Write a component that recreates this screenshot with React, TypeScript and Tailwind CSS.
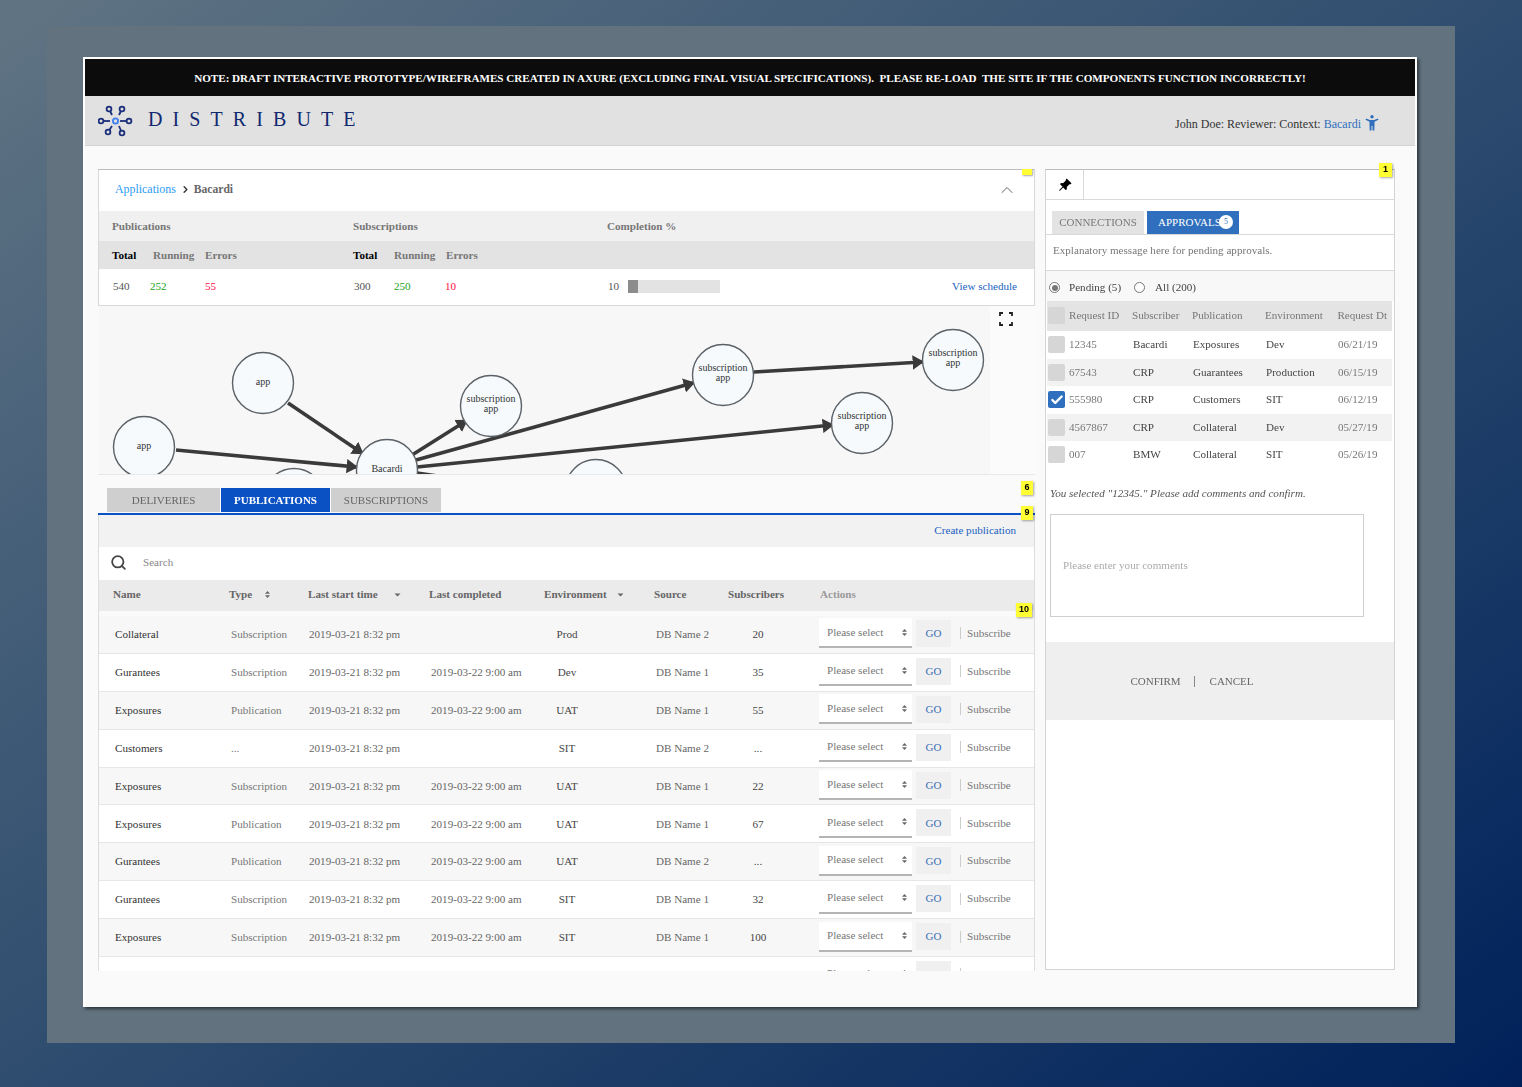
import { ChevronRight, ChevronUp, Check, Search } from "lucide-react";
import { BsPinAngleFill } from "react-icons/bs";

const ROWS = [
  ["Collateral", "Subscription", "2019-03-21 8:32 pm", "", "Prod", "DB Name 2", "20"],
  ["Gurantees", "Subscription", "2019-03-21 8:32 pm", "2019-03-22 9:00 am", "Dev", "DB Name 1", "35"],
  ["Exposures", "Publication", "2019-03-21 8:32 pm", "2019-03-22 9:00 am", "UAT", "DB Name 1", "55"],
  ["Customers", "...", "2019-03-21 8:32 pm", "", "SIT", "DB Name 2", "..."],
  ["Exposures", "Subscription", "2019-03-21 8:32 pm", "2019-03-22 9:00 am", "UAT", "DB Name 1", "22"],
  ["Exposures", "Publication", "2019-03-21 8:32 pm", "2019-03-22 9:00 am", "UAT", "DB Name 1", "67"],
  ["Gurantees", "Publication", "2019-03-21 8:32 pm", "2019-03-22 9:00 am", "UAT", "DB Name 2", "..."],
  ["Gurantees", "Subscription", "2019-03-21 8:32 pm", "2019-03-22 9:00 am", "SIT", "DB Name 1", "32"],
  ["Exposures", "Subscription", "2019-03-21 8:32 pm", "2019-03-22 9:00 am", "SIT", "DB Name 1", "100"],
  ["", "", "", "", "", "", ""],
];

const APPROVALS = [
  ["12345", "Bacardi", "Exposures", "Dev", "06/21/19"],
  ["67543", "CRP", "Guarantees", "Production", "06/15/19"],
  ["555980", "CRP", "Customers", "SIT", "06/12/19"],
  ["4567867", "CRP", "Collateral", "Dev", "05/27/19"],
  ["007", "BMW", "Collateral", "SIT", "05/26/19"],
];

const NODES: [number, number, string, string?][] = [
  [164, 77, "app"],
  [45, 141, "app"],
  [288, 164, "Bacardi"],
  [195, 193, ""],
  [497, 184, ""],
  [392, 100, "subscription", "app"],
  [624, 69, "subscription", "app"],
  [854, 54, "subscription", "app"],
  [763, 117, "subscription", "app"],
];

const EDGES = [
  [189, 97, 263, 147],
  [77, 144, 257, 161],
  [313, 149, 367, 115],
  [317, 154, 594, 77],
  [318, 161, 733, 119],
  [655, 66, 823, 56],
  [318, 167, 345, 171],
];

function Badge({ label, className }: { label: string; className: string }) {
  return (
    <span className={`absolute z-10 flex items-center justify-center bg-[#ffff33] font-['Liberation_Sans'] text-[9px] font-bold text-black shadow-[1px_1px_2px_rgba(0,0,0,0.35)] ${className}`}>
      {label}
    </span>
  );
}

function Logo() {
  const spokes = [
    [109, 107, 112, 113],
    [122, 107, 119, 113],
    [129, 119, 120, 119],
    [122, 131, 119, 124],
    [108, 130, 112, 124],
    [101, 119, 110, 119],
  ];
  return (
    <svg width="36" height="34" viewBox="98 102 36 34" className="shrink-0">
      {spokes.map(([x, y, x2, y2], i) => (
        <g key={i}>
          <line x1={x} y1={y} x2={x2} y2={y2} stroke="#1b2f7a" strokeWidth="1.8" />
          <circle cx={x} cy={y} r="2.4" fill="#e1e1e1" stroke="#1b2f7a" strokeWidth="1.8" />
        </g>
      ))}
      <circle cx="115.5" cy="119" r="2.6" fill="#e1e1e1" stroke="#3f7ff0" strokeWidth="1.8" />
    </svg>
  );
}

// solid sort carets used by table headers and selects
function Caret({ both, className }: { both?: boolean; className?: string }) {
  return (
    <svg width="7" height="9" viewBox="0 0 7 9" className={className} fill="currentColor">
      {both && <path d="M3.5 1L6 3.7H1Z" />}
      <path d={both ? "M3.5 8L6 5.3H1Z" : "M3.5 6.5L6.5 3.5H0.5Z"} />
    </svg>
  );
}

function Graph() {
  return (
    <svg width="891" height="168" viewBox="0 0 891 168" className="block">
      <defs>
        <marker id="head" markerWidth="4" markerHeight="4" refX="2.6" refY="2" orient="auto">
          <path d="M0 0L3.2 2L0 4Z" fill="#3a3a3a" />
        </marker>
      </defs>
      {EDGES.map(([x1, y1, x2, y2], i) => (
        <line key={i} x1={x1} y1={y1} x2={x2} y2={y2} stroke="#3a3a3a" strokeWidth="3.6" markerEnd={i < 6 ? "url(#head)" : undefined} />
      ))}
      {NODES.map(([cx, cy, a, b], i) => (
        <g key={i}>
          <circle cx={cx} cy={cy} r="30.5" fill="#f6fafd" stroke="#5b6166" strokeWidth="1.4" />
          <text x={cx} y={b ? cy - 4 : cy + 2} textAnchor="middle" fontSize="10" fill="#333">{a}</text>
          {b && <text x={cx} y={cy + 5.5} textAnchor="middle" fontSize="10" fill="#333">{b}</text>}
        </g>
      ))}
    </svg>
  );
}

function ActionsCell({ odd }: { odd: boolean }) {
  return (
    <div className="flex items-center pb-[2px] pl-[31px]">
      <div className={`flex h-[30px] w-[93px] items-center justify-between border-b-2 border-[#b4b4b4] pl-[8px] pr-[4px] text-[11.1px] text-[#777] ${odd ? "bg-white" : ""}`}>
        Please select
        <Caret both className="text-[#666]" />
      </div>
      <div className="ml-[4px] flex h-[27px] w-[35px] items-center justify-center bg-[#f0f0f0] text-[11px] text-[#3b6fb5]">GO</div>
      <div className="ml-[9px] h-[12px] w-px bg-[#ccc]" />
      <span className="ml-[6px] text-[11.1px] text-[#777]">Subscribe</span>
    </div>
  );
}

function LeftColumn() {
  return (
    <div className="relative h-[801px] w-[937px] shrink-0">
      <Badge label="" className="right-[3px] top-0 h-[6px] w-[10px]" />
      {/* Summary card */}
      <div className="border border-[#d9d9d9] border-t-[#bdbdbd] bg-white">
        <div className="flex h-[41px] items-center pb-[2px] pl-[16px] pr-[17px] text-[11.9px]">
          <span className="text-[#2b9bf4]">Applications</span>
          <ChevronRight size={11} strokeWidth={3} className="ml-[4px] mr-[3px] text-[#333]" />
          <span className="text-[11.6px] font-bold text-[#666]">Bacardi</span>
          <ChevronUp size={20} strokeWidth={1} className="ml-auto text-[#444]" />
        </div>
        <div className="grid h-[30px] grid-cols-[241px_254px_1fr] items-center bg-[#f0f0f0] pl-[13px] text-[11.1px] font-bold text-[#777]">
          <span>Publications</span>
          <span>Subscriptions</span>
          <span>Completion %</span>
        </div>
        <div className="grid h-[28px] grid-cols-[241px_254px_1fr] items-center bg-[#e3e3e3] pl-[13px] text-[11.1px] font-bold text-[#777]">
          <div className="flex">
            <span className="w-[41px] text-black">Total</span>
            <span className="w-[52px]">Running</span>
            <span>Errors</span>
          </div>
          <div className="flex">
            <span className="w-[41px] text-black">Total</span>
            <span className="w-[52px]">Running</span>
            <span>Errors</span>
          </div>
          <span />
        </div>
        <div className="grid h-[36px] grid-cols-[241px_254px_1fr] items-center pb-[1px] pl-[14px] text-[11.1px] text-[#555]">
          <div className="flex">
            <span className="w-[37px]">540</span>
            <span className="w-[55px] text-[#17a517]">252</span>
            <span className="text-[#ff0a45]">55</span>
          </div>
          <div className="flex">
            <span className="w-[40px]">300</span>
            <span className="w-[51px] text-[#17a517]">250</span>
            <span className="text-[#ff0a45]">10</span>
          </div>
          <div className="flex items-center pr-[17px]">
            <span className="w-[20px]">10</span>
            <div className="h-[13px] w-[92px] bg-[#e3e3e3]">
              <div className="h-full w-[10px] bg-[#8c8c8c]" />
            </div>
            <span className="ml-auto text-[#1a5fc0]">View schedule</span>
          </div>
        </div>
      </div>

      {/* Relationship diagram */}
      <div className="relative h-[168px] overflow-hidden bg-[#fbfbfb] pl-px">
        <div className="w-[891px] bg-[#f7f7f7]">
          <Graph />
        </div>
        <svg width="14" height="14" viewBox="0 0 14 14" className="absolute right-[22px] top-[6px]" fill="none" stroke="#222" strokeWidth="1.8">
          <path d="M1 4V1H4M10 1H13V4M13 10V13H10M4 13H1V10" />
        </svg>
      </div>

      {/* Tabs */}
      <div className="relative h-[39px] border-t border-[#e8e8e8] pl-[9px] pt-[13px]">
        <div className="flex h-[24px] text-[11px]">
          <div className="flex w-[113px] items-center justify-center bg-[#cfcfcf] text-[#666]">DELIVERIES</div>
          <div className="ml-[1px] flex w-[109px] items-center justify-center bg-[#0a52c4] font-bold text-white">PUBLICATIONS</div>
          <div className="ml-[1px] flex w-[110px] items-center justify-center bg-[#cfcfcf] text-[#666]">SUBSCRIPTIONS</div>
        </div>
        <Badge label="6" className="right-[2px] top-[6px] h-[14px] w-[12px]" />
      </div>
      <div className="relative z-10 h-[2px] bg-[#0a52c4]">
        <Badge label="9" className="-top-[7px] right-[2px] h-[14px] w-[12px]" />
      </div>

      {/* Publications table */}
      <div className="relative h-[456px] overflow-hidden border-x border-[#dddddd]">
        <div className="flex h-[32px] items-center justify-end bg-[#f2f2f2] pb-[2px] pr-[18px] text-[11.1px] text-[#1a5fc0]">Create publication</div>
        <div className="flex h-[33px] items-center bg-white pb-[2px] pl-[11px] text-[11.1px] text-[#888]">
          <Search size={17} strokeWidth={2.5} className="text-[#444]" />
          <span className="ml-[16px]">Search</span>
        </div>
        <div className="grid h-[31px] grid-cols-[116px_79px_121px_115px_110px_74px_92px_1fr] items-center bg-[#ebebeb] pb-[2px] pl-[14px] text-[11.1px] font-bold text-[#666]">
          <span>Name</span>
          <span className="flex items-center">Type<Caret both className="ml-[12px]" /></span>
          <span className="flex items-center">Last start time<Caret className="ml-[16px]" /></span>
          <span>Last completed</span>
          <span className="flex items-center">Environment<Caret className="ml-[10px]" /></span>
          <span>Source</span>
          <span>Subscribers</span>
          <span className="text-[#999]">Actions</span>
        </div>
        <div className="h-[5px] bg-[#fafafa]" />
        {ROWS.map((r, i) => (
          <div
            key={i}
            className={`grid h-[37.9px] grid-cols-[116px_78px_122px_100px_72px_53px_72px_60px_1fr] items-center border-b border-[#e6e6e6] pl-[16px] text-[11.1px] ${i % 2 === 0 ? "bg-[#f7f7f7]" : "bg-white"}`}
          >
            <span className="text-[#333]">{r[0]}</span>
            <span className="text-[#777]">{r[1]}</span>
            <span className="text-[#666]">{r[2]}</span>
            <span className="text-[#666]">{r[3]}</span>
            <span className="text-center text-[#444]">{r[4]}</span>
            <span />
            <span className="text-[#666]">{r[5]}</span>
            <span className="text-center text-[#444]">{r[6]}</span>
            <ActionsCell odd={i % 2 === 0} />
          </div>
        ))}
      </div>
      <Badge label="10" className="right-[3px] top-[434px] h-[14px] w-[16px]" />
    </div>
  );
}

function Checkbox({ checked }: { checked?: boolean }) {
  return (
    <span className={`flex h-[17px] w-[17px] items-center justify-center rounded-[2px] ${checked ? "bg-[#2f6fbd]" : "bg-[#d6d6d6]"}`}>
      {checked && <Check size={14} strokeWidth={4} className="text-white" />}
    </span>
  );
}

function RightPanel() {
  return (
    <div className="relative ml-[10px] flex h-[801px] w-[350px] shrink-0 flex-col border border-[#d4d4d4] border-t-[#bdbdbd] bg-white">
      <Badge label="1" className="-top-[7px] right-[2px] h-[14px] w-[13px]" />
      <div className="h-[30px] border-b border-[#d9d9d9]">
        <div className="flex h-full w-[38px] items-center justify-center border-r border-[#d9d9d9]">
          <BsPinAngleFill size={14} className="text-black" />
        </div>
      </div>
      <div className="flex h-[35px] items-end border-b border-[#d9d9d9] pl-[6px] text-[11px]">
        <div className="flex h-[23px] w-[92px] items-center justify-center bg-[#e3e3e3] text-[#777]">CONNECTIONS</div>
        <div className="relative ml-[3px] flex h-[23px] w-[92px] items-center bg-[#2f6fbd] pl-[11px] text-white">
          APPROVALS
          <span className="absolute right-[6px] top-[4px] flex h-[14px] w-[14px] items-center justify-center rounded-full bg-white text-[8px] text-[#2f6fbd]">5</span>
        </div>
      </div>
      <div className="flex h-[36px] items-center border-b border-[#d9d9d9] pb-[4px] pl-[7px] text-[11.1px] text-[#777]">
        Explanatory message here for pending approvals.
      </div>
      <div className="flex h-[30px] items-center bg-[#f8f8f8] pl-[3px] pt-[3px] text-[11.1px] text-[#444]">
        <span className="flex h-[11px] w-[11px] items-center justify-center rounded-full border border-[#777] bg-white">
          <span className="h-[6px] w-[6px] rounded-full bg-[#777]" />
        </span>
        <span className="ml-[9px]">Pending (5)</span>
        <span className="ml-[13px] h-[11px] w-[11px] rounded-full border border-[#777] bg-white" />
        <span className="ml-[10px]">All (200)</span>
      </div>
      <div className="ml-px mr-[2px] grid h-[30px] grid-cols-[21px_63px_60px_73px_1fr] items-center bg-[#e4e4e4] pb-[2px] pl-px text-[11.1px] text-[#777]">
        <Checkbox />
        <span>Request ID</span>
        <span>Subscriber</span>
        <span>Publication</span>
        <span className="flex justify-between pr-[5px]"><span>Environment</span><span>Request Dt</span></span>
      </div>
      {APPROVALS.map((a, i) => (
        <div
          key={a[0]}
          className={`ml-px mr-[2px] grid h-[27.5px] grid-cols-[21px_64px_60px_73px_72px_1fr] items-center pl-px text-[11.1px] text-[#444] ${i % 2 === 1 ? "bg-[#f2f2f2]" : "bg-white"}`}
        >
          <Checkbox checked={i === 2} />
          <span className="text-[#777]">{a[0]}</span>
          <span>{a[1]}</span>
          <span>{a[2]}</span>
          <span>{a[3]}</span>
          <span className="text-[#777]">{a[4]}</span>
        </div>
      ))}
      <p className="mt-[16px] pl-[4px] text-[11.1px] italic text-[#555]">You selected "12345." Please add comments and confirm.</p>
      <div className="ml-[4px] mt-[13px] flex h-[103px] w-[314px] items-center border border-[#cfcfcf] bg-white pl-[12px] text-[11.1px] text-[#aaa]">
        Please enter your comments
      </div>
      <div className="mt-[25px] flex h-[78px] items-center justify-center bg-[#efefef] pr-[56px] text-[11px] text-[#666]">
        <span>CONFIRM</span>
        <span className="ml-[13px] mr-[15px] h-[11px] w-px bg-[#888]" />
        <span>CANCEL</span>
      </div>
    </div>
  );
}

export default function App() {
  return (
    <div className="h-[1087px] w-[1522px] overflow-hidden bg-gradient-to-br from-[#607483] via-[#2f4d6f] to-[#01205a] pl-[47px] pt-[26px] font-['Liberation_Serif',serif]">
      <div className="h-[1017px] w-[1408px] bg-[#62737f] pl-[36px] pt-[31px]">
        <div className="h-[950px] w-[1334px] border-[2px] border-b-0 border-white bg-[#fafafa] shadow-[2px_2px_3px_rgba(0,0,0,0.55)] blur-[0.3px]">
          <div className="flex h-[37px] items-center justify-center whitespace-pre bg-[#0c0c0c] pt-[2px] text-[11.1px] font-bold text-white">
            NOTE: DRAFT INTERACTIVE PROTOTYPE/WIREFRAMES CREATED IN AXURE (EXCLUDING FINAL VISUAL SPECIFICATIONS).  PLEASE RE-LOAD  THE SITE IF THE COMPONENTS FUNCTION INCORRECTLY!
          </div>
          <div className="flex h-[50px] items-center border-b border-[#d4d4d4] bg-[#e1e1e1] pl-[13px] pr-[36px]">
            <Logo />
            <span className="mb-[4px] ml-[14px] text-[20px] leading-none tracking-[10.1px] text-[#10296e]">DISTRIBUTE</span>
            <span className="ml-auto mt-[6px] flex items-center text-[12px] text-[#333]">
              John Doe: Reviewer: Context:&nbsp;<span className="text-[#2f6fbd]">Bacardi</span>
              <svg width="14" height="16" viewBox="0 0 14 16" className="-mt-[2px] ml-[4px]" fill="#2f6fbd">
                <circle cx="7" cy="1.8" r="1.7" />
                <path d="M1 3.4L5 5H9L13 3.4L13.5 4.8L9.5 6.8V10L9.3 15.5H7.5V11H6.5V15.5H4.7L4.5 10V6.8L0.5 4.8Z" />
              </svg>
            </span>
          </div>
          <div className="flex pl-[13px] pt-[23px]">
            <LeftColumn />
            <RightPanel />
          </div>
        </div>
      </div>
    </div>
  );
}
